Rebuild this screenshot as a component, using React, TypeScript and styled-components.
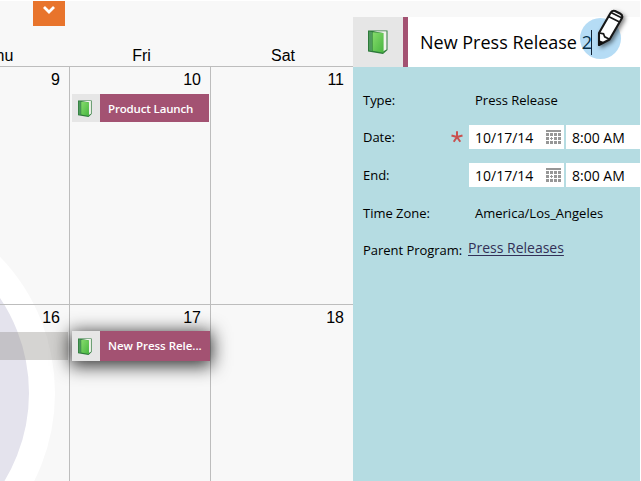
import React from "react";
import styled, { createGlobalStyle } from "styled-components";

const Global = createGlobalStyle`
  * { box-sizing: border-box; }
  body { margin: 0; background: #fff; overflow: hidden; }
`;

const Page = styled.main`
  position: relative;
  display: flex;
  width: 641px;
  height: 481px;
  padding-top: 1px;
  overflow: hidden;
  background: #fff;
  color: #000;
  font-family: "Open Sans", sans-serif;
`;

const Calendar = styled.section`
  position: relative;
  display: flex;
  flex-direction: column;
  width: 353px;
  height: 480px;
  background: #f8f8f8;
  overflow: hidden;
`;

const Halo = styled.div`
  position: absolute;
  left: -337px;
  top: 196px;
  width: 392px;
  height: 392px;
  border-radius: 50%;
  border: 26px solid #fff;
  background: #e4e3ed;
`;

const Toolbar = styled.div`
  height: 40px;
  padding-left: 33px;
`;

const MenuButton = styled.button`
  display: flex;
  justify-content: center;
  width: 32px;
  height: 25px;
  padding: 4px 0 0;
  border: 0;
  background: #e8742c;
`;

const Columns = styled.div`
  display: grid;
  grid-template-columns: 70px 141px 142px;
`;

const DayNames = styled(Columns)`
  height: 25px;
  font: 16px/30px "Liberation Sans", sans-serif;
`;

const DayName = styled.div<{ $shift?: number }>`
  text-align: center;
  text-indent: ${(p) => p.$shift ?? 0}px;
  white-space: nowrap;
`;

const Week = styled(Columns)<{ $height: number }>`
  position: relative;
  height: ${(p) => p.$height}px;
  border-top: 1px solid #bdbdbd;
`;

const Day = styled.div`
  border-right: 1px solid #bdbdbd;
  &:last-child { border-right: 0; }
`;

const DayNumber = styled.div`
  height: 27px;
  padding-right: 9px;
  text-align: right;
  font: 16px/26px "Liberation Sans", sans-serif;
`;

const SpanBar = styled.div`
  width: 68px;
  height: 28px;
  background: rgba(145, 143, 138, 0.38);
`;

const Event = styled.div<{ $active?: boolean }>`
  position: relative;
  display: flex;
  width: ${(p) => (p.$active ? 138 : 137)}px;
  height: ${(p) => (p.$active ? 30 : 28)}px;
  margin: ${(p) => (p.$active ? "-1px" : "0")} 0 0 2px;
  background: #a35272;
  box-shadow: ${(p) => (p.$active ? "0 3px 18px 2px rgba(0,0,0,.8)" : "none")};
`;

const EventIcon = styled.span`
  display: flex;
  align-items: center;
  justify-content: center;
  width: 28px;
  padding-right: 2px;
  background: #e6e6e6;
`;

const EventTitle = styled.span<{ $active?: boolean }>`
  padding-left: 8px;
  color: #fff;
  font: 600 11.5px/30px "Open Sans", sans-serif;
  letter-spacing: ${(p) => (p.$active ? -0.02 : -0.15)}px;
  white-space: nowrap;
`;

const Details = styled.aside`
  width: 287px;
  height: 480px;
  background: #f8f8f8;
`;

const TitleBar = styled.header`
  display: flex;
  height: 50px;
  margin-top: 16px;
  background: #fff;
`;

const TitleIcon = styled.div`
  display: flex;
  align-items: center;
  justify-content: center;
  width: 55px;
  border-right: 5px solid #a35272;
  background: #e6e6e6;
`;

const Title = styled.h1`
  margin: 0;
  padding-left: 12px;
  font-size: 18px;
  font-weight: 400;
  line-height: 50px;
  white-space: nowrap;
`;

const Form = styled.div`
  display: grid;
  grid-template-columns: 106px 1fr;
  grid-template-rows: 36px 38px 38px 38px 36px;
  align-items: center;
  align-content: start;
  height: 414px;
  padding: 15px 0 0 10px;
  background: #b5dce2;
  font-size: 13px;
`;

const Label = styled.div`
  display: flex;
  align-items: center;
  justify-content: space-between;
  padding-right: 6px;
  letter-spacing: -0.03px;
  white-space: nowrap;
`;

const Value = styled.div`
  padding-left: 6px;
  white-space: nowrap;
`;

const Fields = styled.div`
  display: flex;
  gap: 2px;
  font-size: 14px;
`;

const Field = styled.div<{ $width: number }>`
  display: flex;
  align-items: center;
  justify-content: space-between;
  width: ${(p) => p.$width}px;
  height: 24px;
  padding: 0 3px 0 6px;
  background: #fff;
  white-space: nowrap;
`;

const ProgramLink = styled.a`
  justify-self: start;
  margin: -5px 0 0 -1px;
  color: #333057;
  font-size: 14px;
  text-decoration: underline;
  text-decoration-thickness: 1px;
  text-underline-offset: 2px;
`;

const Highlight = styled.div`
  position: absolute;
  left: 580px;
  top: 18px;
  width: 41px;
  height: 41px;
  border-radius: 50%;
  background: rgba(24, 146, 224, 0.32);
`;

const Caret = styled.div`
  position: absolute;
  left: 591px;
  top: 30px;
  width: 1px;
  height: 25px;
  background: #123;
`;

const Pencil = styled.svg`
  position: absolute;
  left: 590px;
  top: 4px;
  filter: drop-shadow(2px 2px 2px rgba(0, 0, 0, 0.5));
`;

const Book = ({ width, height }: { width: number; height: number }) => (
  <svg width={width} height={height} viewBox="0 0 20 24" aria-hidden="true">
    <defs>
      <linearGradient id="cover" x1="0" y1="0" x2="1" y2="1">
        <stop offset="0" stopColor="#86dc6c" />
        <stop offset="1" stopColor="#47b53f" />
      </linearGradient>
    </defs>
    <path d="M0 .5h19.500V20l-4.500 4L0 21.500Z" fill="#2d7a3a" />
    <path d="M5 1.200h13.500V19.500L15 21.500V3Z" fill="#f0f4ec" />
    <path d="M1 1.500 4 2v19l-3-.5Z" fill="#4f9a5d" />
    <path d="M4.600 2.200 15.600 3v19.800l-11-2.100Z" fill="url(#cover)" />
  </svg>
);

const CalendarIcon = () => (
  <svg width="15" height="14" viewBox="0 0 15 14" fill="#969696" aria-hidden="true">
    <rect width="15" height="2" />
    {[3, 7, 11].map((y) =>
      [0, 4, 8, 12].map((x) =>
        y === 7 && x === 4 ? (
          <path key="today" d="M5 7h1v1h1v1H6v1H5V9H4V8h1Z" />
        ) : (
          <rect key={`${x}-${y}`} x={x} y={y} width="3" height="3" />
        ),
      ),
    )}
  </svg>
);

const RequiredMark = () => (
  <svg width="12" height="12" viewBox="0 0 12 12" stroke="#c9504f" strokeWidth="2" aria-label="required">
    <path d="M6 6V.3M6 6 .5 4.500M6 6l5.500-1.500M6 6l-3.300 4.800M6 6l3.300 4.800" />
  </svg>
);

const DateRow = ({ label, required }: { label: string; required?: boolean }) => (
  <>
    <Label>{label}{required && <RequiredMark />}</Label>
    <Fields>
      <Field $width={95}>10/17/14<CalendarIcon /></Field>
      <Field $width={74}>8:00 AM</Field>
    </Fields>
  </>
);

export default function App() {
  return (
    <>
      <Global />
      <Page>
        <Calendar>
          <Halo />
          <Toolbar>
            <MenuButton aria-label="Open menu">
              <svg width="14" height="10" viewBox="0 0 14 10" fill="none" stroke="#fff" strokeWidth="2.8">
                <path d="m2 2 5 5 5-5" />
              </svg>
            </MenuButton>
          </Toolbar>
          <DayNames>
            <DayName $shift={-71}>Thu</DayName>
            <DayName $shift={2}>Fri</DayName>
            <DayName $shift={2}>Sat</DayName>
          </DayNames>
          <Week $height={238}>
            <Day><DayNumber>9</DayNumber></Day>
            <Day>
              <DayNumber>10</DayNumber>
              <Event>
                <EventIcon><Book width={14} height={17} /></EventIcon>
                <EventTitle>Product Launch</EventTitle>
              </Event>
            </Day>
            <Day><DayNumber>11</DayNumber></Day>
          </Week>
          <Week $height={177}>
            <Day><DayNumber>16</DayNumber><SpanBar /></Day>
            <Day>
              <DayNumber>17</DayNumber>
              <Event $active>
                <EventIcon><Book width={14} height={17} /></EventIcon>
                <EventTitle $active>New Press Rele...</EventTitle>
              </Event>
            </Day>
            <Day><DayNumber>18</DayNumber></Day>
          </Week>
        </Calendar>
        <Details>
          <TitleBar>
            <TitleIcon><Book width={20} height={24} /></TitleIcon>
            <Title>New Press Release 2</Title>
          </TitleBar>
          <Form>
            <Label>Type:</Label><Value>Press Release</Value>
            <DateRow label="Date:" required />
            <DateRow label="End:" />
            <Label>Time Zone:</Label><Value>America/Los_Angeles</Value>
            <Label>Parent Program:</Label><ProgramLink>Press Releases</ProgramLink>
          </Form>
        </Details>
        <Highlight />
        <Caret />
        <Pencil width="40" height="46" viewBox="0 0 40 46">
          <path d="M9 29 20.500 9Q22 6 25 7l5 2.500q3 1.500 2 4.500L19.500 35.500 9 41Z" fill="#fff" stroke="#171717" strokeWidth="2.1" strokeLinejoin="round" />
          <path d="m18.500 12.500 11 5.500M21 8.500l11 5.500M9.500 29l4 .8 1.200 3 4.800 2.500" fill="none" stroke="#171717" strokeWidth="1.7" />
          <path d="M8.500 36v6l6.500-3.500Z" fill="#111" />
        </Pencil>
      </Page>
    </>
  );
}
